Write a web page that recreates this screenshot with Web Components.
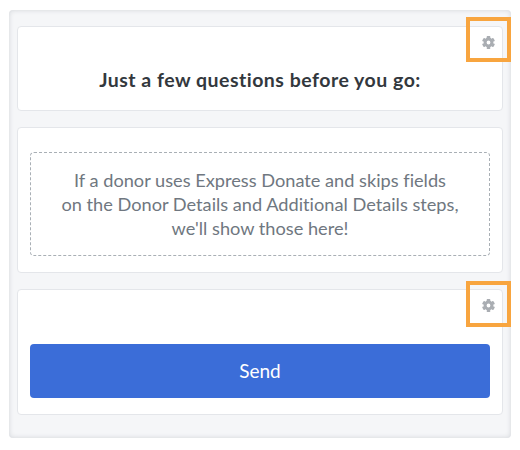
<!DOCTYPE html>
<html>
<head>
<meta charset="utf-8">
<style>
  html, body { margin: 0; padding: 0; background: #fff; }
  body { font-family: Lato, "Liberation Sans", sans-serif; font-variant-ligatures: none; }
  h2 { margin: 0; font-size: 19.5px; line-height: 24px; letter-spacing: .5px; font-weight: 700; color: #33383d; text-align: center; }
</style>
</head>
<body>
<form-panel>
  <form-card gear style="--card-pad: 41px 12px 18px">
    <h2>Just a few questions before you go:</h2>
  </form-card>
  <form-card style="--card-pad: 24px 12px 16px">
    <empty-note>If a donor uses Express Donate and skips fields<br>on the Donor Details and Additional Details steps,<br>we'll show those here!</empty-note>
  </form-card>
  <form-card gear style="--card-pad: 54px 12px 16px; --frame-top: -9px; --frame-h: 46px">
    <send-button>Send</send-button>
  </form-card>
</form-panel>

<script>
class FormPanel extends HTMLElement {
  constructor () {
    super()
    this.attachShadow({ mode: 'open' }).innerHTML = `
      <style>
        :host {
          display: flex;
          flex-direction: column;
          gap: 16px;
          box-sizing: border-box;
          width: 502px;
          height: 428px;
          margin: 10px 0 0 9px;
          padding: 16px 8px;
          background: #f5f6f8;
          border-radius: 4px;
          box-shadow: inset 0 0 5px rgba(120, 125, 135, 0.28);
        }
      </style>
      <slot></slot>
    `
  }
}

class FormCard extends HTMLElement {
  constructor () {
    super()
    this.attachShadow({ mode: 'open' }).innerHTML = `
      <style>
        :host {
          display: block;
          position: relative;
          box-sizing: border-box;
          padding: var(--card-pad, 12px);
          background: #fff;
          border: 1px solid #e4e6ea;
          border-radius: 4px;
        }
        :host([gear]) .frame, :host([gear]) svg { display: block; }
        .frame {
          display: none;
          position: absolute;
          box-sizing: border-box;
          top: var(--frame-top, -10px);
          right: -9px;
          width: 45px;
          height: var(--frame-h, 45px);
          border: 4px solid #f8a53f;
        }
        svg {
          display: none;
          position: absolute;
          top: 7.5px;
          right: 6px;
          width: 15px;
          height: 15px;
        }
      </style>
      <div class="frame"></div>
      <svg viewBox="-7.5 -7.5 15 15">
        <circle r="3.400" fill="none" stroke="#a9adb2" stroke-width="3"/>
        <g fill="#a9adb2">
          <rect x="-1.800" y="-6.400" width="3.600" height="2" rx=".6"/>
          <rect x="-1.800" y="-6.400" width="3.600" height="2" rx=".6" transform="rotate(60)"/>
          <rect x="-1.800" y="-6.400" width="3.600" height="2" rx=".6" transform="rotate(120)"/>
          <rect x="-1.800" y="-6.400" width="3.600" height="2" rx=".6" transform="rotate(180)"/>
          <rect x="-1.800" y="-6.400" width="3.600" height="2" rx=".6" transform="rotate(240)"/>
          <rect x="-1.800" y="-6.400" width="3.600" height="2" rx=".6" transform="rotate(300)"/>
        </g>
      </svg>
      <slot></slot>
    `
  }
}

class EmptyNote extends HTMLElement {
  constructor () {
    super()
    this.attachShadow({ mode: 'open' }).innerHTML = `
      <style>
        :host {
          display: block;
          box-sizing: border-box;
          height: 104px;
          padding: 15px 0 17px;
          border: 1px dashed #a9afb5;
          border-radius: 4px;
          color: #6f7780;
          font-size: 18.2px;
          line-height: 24px;
          text-align: center;
        }
      </style>
      <slot></slot>
    `
  }
}

class SendButton extends HTMLElement {
  constructor () {
    super()
    this.attachShadow({ mode: 'open' }).innerHTML = `
      <style>
        :host {
          display: flex;
          align-items: center;
          justify-content: center;
          box-sizing: border-box;
          height: 54px;
          padding-bottom: 2px;
          background: #3b6dd8;
          border-radius: 4px;
          color: #fff;
          font-size: 19px;
          font-weight: 400;
        }
      </style>
      <slot></slot>
    `
  }
}

customElements.define('form-panel', FormPanel)
customElements.define('form-card', FormCard)
customElements.define('empty-note', EmptyNote)
customElements.define('send-button', SendButton)
</script>
</body>
</html>
